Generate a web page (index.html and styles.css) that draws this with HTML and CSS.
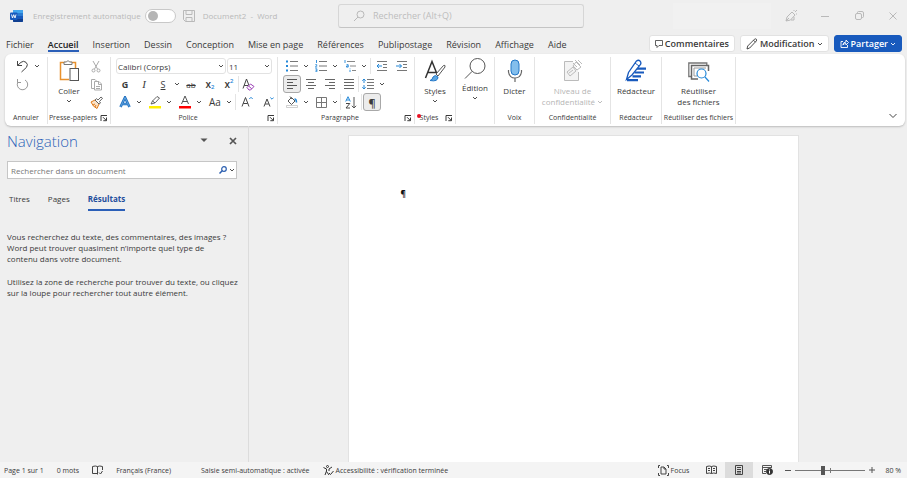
FILE: index.html
```html
<!DOCTYPE html>
<html lang="fr">

<head>
    <meta charset="UTF-8">
    <meta name="viewport" content="width=device-width, initial-scale=1.0">
    <title>Document2 - Word</title>
    <link rel="stylesheet" href="styles.css">
</head>

<body>
    <!-- shared symbols -->
    <svg class="sprite" width="0" height="0" aria-hidden="true">
        <symbol id="caret" viewBox="0 0 6 6"><path d="M1 2l2 2 2-2" fill="none" stroke="currentColor" stroke-width=".9"/></symbol>
        <symbol id="launcher" viewBox="0 0 8 8"><path d="M1 7V1.500h6M3 3.200l3.200 3.200M6.500 3.500v3.200H3.300" fill="none" stroke="currentColor"/></symbol>
    </svg>

    <header class="titlebar">
        <div class="title-left">
            <svg class="logo" width="13" height="12" viewBox="0 0 13 12">
                <rect x="3" width="10" height="12" rx="1" fill="#2b7cd3"/>
                <path d="M3 1a1 1 0 0 1 1-1h8a1 1 0 0 1 1 1v2H3z" fill="#41a5ee"/>
                <path d="M3 6h10v3H3z" fill="#185abd"/>
                <path d="M3 9h10v2a1 1 0 0 1-1 1H4a1 1 0 0 1-1-1z" fill="#103f91"/>
                <rect y="2.500" width="7.500" height="7.500" rx="1" fill="#185abd"/>
                <path d="M1.500 4.500l1 3.500 1.200-3.300L5 8l1-3.500" fill="none" stroke="#fff" stroke-width=".9"/>
            </svg>
            <label class="autosave" for="autosave">Enregistrement automatique</label>
            <input class="switch" type="checkbox" id="autosave">
            <button class="save" aria-label="Enregistrer">
                <svg width="12" height="12" viewBox="0 0 12 12" fill="none" stroke="currentColor"><path d="M.5.5h11v11h-9l-2-2zM3 .5v4h6v-4M3 11.500v-4h6v4"/></svg>
            </button>
            <span class="doc-name">Document2&nbsp; -&nbsp; Word</span>
        </div>
        <div class="search">
            <svg width="12" height="12" viewBox="0 0 12 12" fill="none" stroke="currentColor"><circle cx="7.500" cy="4.500" r="3.500"/><path d="M5 7L1 11"/></svg>
            <input type="search" placeholder="Rechercher (Alt+Q)" aria-label="Rechercher">
        </div>
        <div class="title-right">
            <div class="account"></div>
            <button aria-label="Stylo">
                <svg width="14" height="14" viewBox="0 0 14 14" fill="none" stroke="currentColor"><path d="M2 12l1-4 5-5 3 3-4.500 5zM2 12l3-3M7 11h3V8M10 2V1M11 3l2-2M12 5h1"/></svg>
            </button>
            <button aria-label="Réduire">
                <svg width="8" height="8" viewBox="0 0 8 8" stroke="currentColor"><path d="M0 4.500h8"/></svg>
            </button>
            <button aria-label="Niveau inférieur">
                <svg width="9" height="9" viewBox="0 0 9 9" fill="none" stroke="currentColor"><rect x=".5" y="2.500" width="6" height="6" rx="1.500"/><path d="M2.500 2V1.500q0-1 1-1H7Q8.500.5 8.500 2v3.500q0 1-1 1H7"/></svg>
            </button>
            <button aria-label="Fermer">
                <svg width="8" height="8" viewBox="0 0 8 8" stroke="currentColor"><path d="M.5.5l7 7M7.500.5l-7 7"/></svg>
            </button>
        </div>
    </header>

    <div class="tabs-row">
        <nav class="tabs">
            <a href="#">Fichier</a>
            <a href="#" class="active">Accueil</a>
            <a href="#">Insertion</a>
            <a href="#">Dessin</a>
            <a href="#">Conception</a>
            <a href="#">Mise en page</a>
            <a href="#">Références</a>
            <a href="#">Publipostage</a>
            <a href="#">Révision</a>
            <a href="#">Affichage</a>
            <a href="#">Aide</a>
        </nav>
        <div class="actions">
            <button class="action">
                <svg width="8" height="8" viewBox="0 0 8 8" fill="none" stroke="currentColor" stroke-width=".8"><path d="M.5.5h7v5H4l-2 2v-2H.5z"/></svg>
                Commentaires
            </button>
            <button class="action">
                <svg width="12" height="12" viewBox="0 0 12 12" fill="none" stroke="currentColor" stroke-width=".9"><path d="M1 11l.7-3L8.500 1.200q1-.8 1.800 0t0 1.800L3.700 10zM7.500 2.200l2 2"/></svg>
                Modification
                <svg class="caret"><use href="#caret"/></svg>
            </button>
            <button class="action primary">
                <svg width="9" height="9" viewBox="0 0 9 9" fill="none" stroke="currentColor" stroke-width=".9"><path d="M3 2.500H1v6h6.500V6M2.800 6q.4-3 3.200-3V1l2.500 2.500L6 6V4.500Q4 4.500 2.800 6z"/></svg>
                Partager
                <svg class="caret"><use href="#caret"/></svg>
            </button>
        </div>
    </div>

    <section class="ribbon">
        <div class="group group-undo">
            <div class="group-body">
                <div class="row">
                    <button class="tool" aria-label="Annuler"><svg width="13" height="13" viewBox="0 0 13 13" fill="none" stroke="#444"><path d="M1.500 1v4.500H6M1.500 5.500L5 2.300q2.500-2 5 0t.5 5L5.500 12"/></svg></button>
                    <button class="drop" aria-label="Options d'annulation"><svg class="caret"><use href="#caret"/></svg></button>
                </div>
                <div class="row">
                    <button class="tool" aria-label="Répéter" disabled><svg width="13" height="13" viewBox="0 0 13 13" fill="none" stroke="#999"><path d="M1.500 1v3.500H5M1.800 4.300A5.200 5.200 0 1 0 9 2"/></svg></button>
                </div>
            </div>
            <div class="group-foot"><span>Annuler</span></div>
        </div>

        <div class="group group-clipboard">
            <div class="group-body cols">
                <button class="big">
                    <svg width="22" height="24" viewBox="0 0 22 24" fill="none">
                        <path d="M11 20.500H2.500v-17h15V9" stroke="#e8912d" stroke-width="1.500"/>
                        <path d="M6 5.500V3h2.500q1.500-3 3 0H14v2.500z" fill="#fff" stroke="#777"/>
                        <rect x="12" y="9.500" width="8.500" height="12" fill="#fff" stroke="#555"/>
                    </svg>
                    Coller
                    <svg class="caret"><use href="#caret"/></svg>
                </button>
                <div class="stack">
                    <button class="tool" aria-label="Couper"><svg width="10" height="13" viewBox="0 0 10 13" fill="none" stroke="#aaa"><path d="M2 1l4.500 8M8 1L3.500 9"/><circle cx="2.500" cy="10.500" r="1.500"/><circle cx="7.500" cy="10.500" r="1.500"/></svg></button>
                    <button class="tool" aria-label="Copier"><svg width="13" height="13" viewBox="0 0 13 13" fill="none" stroke="#aaa"><path d="M4 10.500H1.500v-9H5l2 2M4.500 3.500H9l2.500 2.500v6h-7zM8.500 3.500v3h3M6 8.500h4M6 10.500h4"/></svg></button>
                    <button class="tool" aria-label="Reproduire la mise en forme"><svg width="13" height="13" viewBox="0 0 13 13" fill="none"><path d="M1 6l4-2 4 4-2 4.500q-4-1.500-6-6.500z" fill="#fbe3c8" stroke="#e07a1a"/><path d="M3 9l2-1M5 11l1-2" stroke="#e07a1a"/><path d="M5 4l1.500-1.300L8 4l3-3 1.500 1.300-3 3.200L10.500 7 9 8z" fill="#fff" stroke="#555" stroke-width=".9"/></svg></button>
                </div>
            </div>
            <div class="group-foot"><span>Presse-papiers</span><button class="launcher" aria-label="Presse-papiers, options"><svg><use href="#launcher"/></svg></button></div>
        </div>

        <div class="group group-font">
            <div class="group-body">
                <div class="row">
                    <div class="combo combo-font">
                        <select aria-label="Police"><option>Calibri (Corps)</option></select>
                        <svg class="caret"><use href="#caret"/></svg>
                    </div>
                    <div class="combo combo-size">
                        <select aria-label="Taille de police"><option>11</option></select>
                        <svg class="caret"><use href="#caret"/></svg>
                    </div>
                </div>
                <div class="row">
                    <button class="tool bold">G</button>
                    <button class="tool italic">I</button>
                    <div class="split"><button class="tool underline">S</button><button class="drop" aria-label="Soulignement"><svg class="caret"><use href="#caret"/></svg></button></div>
                    <button class="tool strike">ab</button>
                    <button class="tool script">x<sub>2</sub></button>
                    <button class="tool script">x<sup>2</sup></button>
                    <i class="sep"></i>
                    <button class="tool" aria-label="Effacer la mise en forme"><svg width="13" height="13" viewBox="0 0 13 13" fill="none"><path d="M1 10.500L4.500 1 7 7.500M2.200 7.500H6" stroke="#444"/><path d="M5 9.500L8.500 6l3.500 2.500L8.500 12H7z" fill="#fff" stroke="#9b3fb5"/><path d="M6.500 8l3.300 2.800" stroke="#9b3fb5"/></svg></button>
                </div>
                <div class="row wide">
                    <div class="split"><button class="tool" aria-label="Effets de texte"><svg width="12" height="12" viewBox="0 0 12 12" fill="none"><path d="M1.500 11L6 1.500 10.500 11M3.500 8h5" stroke="#1f6fc0" stroke-width="2.600"/><path d="M1.500 11L6 1.500 10.500 11M3.500 8h5" stroke="#8cc4f0" stroke-width=".6"/></svg></button><button class="drop" aria-label="Choisir un effet"><svg class="caret"><use href="#caret"/></svg></button></div>
                    <div class="split"><button class="tool" aria-label="Surlignage"><svg width="12" height="14" viewBox="0 0 12 14" fill="none"><path d="M2 9l1.500-3L8 1.500 10.500 3 6.500 7.500 4 8.500z" fill="#fff" stroke="#555" stroke-width=".9"/><path d="M3.500 6L6 8" stroke="#555"/><path d="M0 11h12v2.500H0z" fill="#ffee00"/></svg></button><button class="drop" aria-label="Couleur de surlignage"><svg class="caret"><use href="#caret"/></svg></button></div>
                    <div class="split"><button class="tool" aria-label="Couleur de police"><svg width="12" height="14" viewBox="0 0 12 14" fill="none"><path d="M2.500 9L6 1l3.500 8M3.800 6.500h4.400" stroke="#555"/><path d="M0 11h12v2.500H0z" fill="#f00"/></svg></button><button class="drop" aria-label="Choisir une couleur"><svg class="caret"><use href="#caret"/></svg></button></div>
                    <div class="split"><button class="tool case">Aa</button><button class="drop" aria-label="Modifier la casse"><svg class="caret"><use href="#caret"/></svg></button></div>
                    <i class="sep"></i>
                    <button class="tool" aria-label="Agrandir la police"><svg width="12" height="12" viewBox="0 0 12 12" fill="none"><path d="M1 10.500L4.500 1.500 8 10.500M2.300 7.500h4.400" stroke="#444"/><path d="M8.300 3L10 1.300 11.700 3" stroke="#2488d8"/></svg></button>
                    <button class="tool" aria-label="Réduire la police"><svg width="12" height="12" viewBox="0 0 12 12" fill="none"><path d="M2 10.500L5 3l3 7.500M3.200 8h3.600" stroke="#444"/><path d="M8.300 1.500L10 3.200l1.700-1.700" stroke="#2488d8"/></svg></button>
                </div>
            </div>
            <div class="group-foot"><span>Police</span><button class="launcher" aria-label="Police, options"><svg><use href="#launcher"/></svg></button></div>
        </div>

        <div class="group group-paragraph">
            <div class="group-body">
                <div class="row spaced">
                    <div class="split"><button class="tool" aria-label="Puces"><svg width="12" height="12" viewBox="0 0 12 12"><path d="M4 1.500h8M4 6h8M4 10.500h8" stroke="#777"/><path d="M0 .5h2v2H0zM0 5h2v2H0zM0 9.500h2v2H0z" fill="#2488d8"/></svg></button><button class="drop" aria-label="Bibliothèque de puces"><svg class="caret"><use href="#caret"/></svg></button></div>
                    <div class="split"><button class="tool" aria-label="Numérotation"><svg width="12" height="12" viewBox="0 0 12 12" fill="none"><path d="M4 1.500h8M4 6h8M4 10.500h8" stroke="#777"/><path d="M1.500 0v3M.3 4.700h1.500v1L.3 7h1.900M.3 8.800h1.600v3H.3M.6 10.300h1.300" stroke="#2488d8" stroke-width=".9"/></svg></button><button class="drop" aria-label="Formats de numérotation"><svg class="caret"><use href="#caret"/></svg></button></div>
                    <div class="split"><button class="tool" aria-label="Liste à plusieurs niveaux"><svg width="12" height="12" viewBox="0 0 12 12" fill="none"><path d="M3 1.500h8M6 6h6M8 10.500h4" stroke="#888"/><path d="M1 0v3M2.500 4.700h1.700v2.400H2.500V6h1.700M6 8.500v.8M6 10v2" stroke="#2488d8" stroke-width=".9"/></svg></button><button class="drop" aria-label="Niveaux"><svg class="caret"><use href="#caret"/></svg></button></div>
                    <i class="sep"></i>
                    <button class="tool" aria-label="Diminuer le retrait"><svg width="12" height="12" viewBox="0 0 12 12" fill="none"><path d="M1 1.500h10M7 4.500h4M7 7.500h4M1 10.500h10" stroke="#777"/><path d="M6 6H1M3 4L1 6l2 2" stroke="#2488d8"/></svg></button>
                    <button class="tool" aria-label="Augmenter le retrait"><svg width="12" height="12" viewBox="0 0 12 12" fill="none"><path d="M1 1.500h10M7 4.500h4M7 7.500h4M1 10.500h10" stroke="#777"/><path d="M0 6h5.500M3.500 4l2 2-2 2" stroke="#2488d8"/></svg></button>
                </div>
                <div class="row">
                    <button class="tool pressed" aria-label="Aligner à gauche"><svg width="12" height="12" viewBox="0 0 12 12" stroke="#555"><path d="M1 1.500h10M1 4.500h6M1 7.500h10M1 10.500h6"/></svg></button>
                    <button class="tool" aria-label="Centrer"><svg width="12" height="12" viewBox="0 0 12 12" stroke="#666"><path d="M1 1.500h10M3 4.500h6M1 7.500h10M3 10.500h6"/></svg></button>
                    <button class="tool" aria-label="Aligner à droite"><svg width="12" height="12" viewBox="0 0 12 12" stroke="#666"><path d="M1 1.500h10M5 4.500h6M1 7.500h10M5 10.500h6"/></svg></button>
                    <button class="tool" aria-label="Justifier"><svg width="12" height="12" viewBox="0 0 12 12" stroke="#666"><path d="M1 1.500h10M1 4.500h10M1 7.500h10M1 10.500h10"/></svg></button>
                    <i class="sep"></i>
                    <div class="split"><button class="tool" aria-label="Interligne"><svg width="12" height="12" viewBox="0 0 12 12" fill="none"><path d="M5 1.500h7M5 4.500h7M5 7.500h7M5 10.500h7" stroke="#777"/><path d="M2 1v4M.3 2.700L2 1l1.700 1.700M2 7v4M.3 9.300L2 11l1.700-1.700" stroke="#2488d8"/></svg></button><button class="drop" aria-label="Espacement"><svg class="caret"><use href="#caret"/></svg></button></div>
                </div>
                <div class="row spaced">
                    <div class="split"><button class="tool" aria-label="Trame de fond"><svg width="12" height="12" viewBox="0 0 12 12" fill="none"><path d="M2 5l3.500-3.500L9 5 5.500 8.500zM4 .5L6 3" stroke="#555"/><path d="M8.500 3q2 0 2 3.500" stroke="#2488d8" stroke-width="1.500"/><path d="M.5 9.500h11v2H.5z" fill="#fff" stroke="#bbb" stroke-width=".7"/></svg></button><button class="drop" aria-label="Couleur de trame"><svg class="caret"><use href="#caret"/></svg></button></div>
                    <div class="split"><button class="tool" aria-label="Bordures"><svg width="11" height="11" viewBox="0 0 11 11" fill="none" stroke="#777"><path d="M.5.5h10v10H.5zM5.500.5v10M.5 5.500h10"/></svg></button><button class="drop" aria-label="Types de bordures"><svg class="caret"><use href="#caret"/></svg></button></div>
                    <i class="sep"></i>
                    <button class="tool" aria-label="Trier"><svg width="12" height="13" viewBox="0 0 12 13" fill="none"><path d="M.7 5.500L3 .7l2.300 4.800M1.500 4h3" stroke="#2488d8"/><path d="M1 7.500h3.800L1 12h4" stroke="#444"/><path d="M9 1v11M6.800 9.800L9 12l2.200-2.200" stroke="#555"/></svg></button>
                    <i class="sep"></i>
                    <button class="tool pressed pilcrow">¶</button>
                </div>
            </div>
            <div class="group-foot"><span>Paragraphe</span><button class="launcher" aria-label="Paragraphe, options"><svg><use href="#launcher"/></svg></button></div>
        </div>

        <div class="group group-styles">
            <div class="group-body">
                <button class="big">
                    <svg width="22" height="24" viewBox="0 0 22 24" fill="none">
                        <path d="M1.500 19L8 2.500 13 15M4 13.500h8" stroke="#333" stroke-width="1.500"/>
                        <path d="M12 15l7.500-8.500q2-1 1.500 1.500L14 17z" fill="#fff" stroke="#555"/>
                        <path d="M6 21.500q2.500-.5 3-3.500 2-3 5 0 0 5-8 3.500z" fill="#5ba7e4" stroke="#2478c8"/>
                    </svg>
                    Styles
                    <svg class="caret"><use href="#caret"/></svg>
                </button>
            </div>
            <div class="group-foot"><span class="marked">Styles</span><button class="launcher" aria-label="Styles, options"><svg><use href="#launcher"/></svg></button></div>
        </div>

        <div class="group group-edit">
            <div class="group-body">
                <button class="big tight">
                    <svg width="22" height="22" viewBox="0 0 22 22" fill="none" stroke="#555"><circle cx="13.500" cy="8" r="7.500"/><path d="M8.200 13.300L1 20.500"/></svg>
                    Édition
                    <svg class="caret"><use href="#caret"/></svg>
                </button>
            </div>
        </div>

        <div class="group group-voice">
            <div class="group-body">
                <button class="big">
                    <svg width="16" height="24" viewBox="0 0 16 24" fill="none"><rect x="4" y="1" width="8" height="15" rx="4" fill="#83beec" stroke="#2478c8"/><path d="M1.500 11v2q1 6 6.500 6t6.500-6v-2M8 19v4" stroke="#666" stroke-width="1.200"/></svg>
                    Dicter
                </button>
            </div>
            <div class="group-foot"><span>Voix</span></div>
        </div>

        <div class="group group-privacy">
            <div class="group-body">
                <button class="big" disabled>
                    <svg width="20" height="24" viewBox="0 0 20 24" fill="none" stroke="#bbb"><path d="M10 2.500H1.500v19h14V13" fill="#f3f3f3"/><path d="M4 13l6-5 3 4-6 5zM6 14l4-3M10 7l3-4 5 5-4 3zM12 1l5 5M15 1l4 4M10 4l4 4"/></svg>
                    <span>Niveau de<br>confidentialité <svg class="caret"><use href="#caret"/></svg></span>
                </button>
            </div>
            <div class="group-foot"><span>Confidentialité</span></div>
        </div>

        <div class="group group-editor">
            <div class="group-body">
                <button class="big">
                    <svg width="24" height="24" viewBox="0 0 24 24" fill="none"><path d="M12 9.700h10M10.500 13.500h9.500M8.500 17.300h8.500M3 21.200h11" stroke="#185abd" stroke-width="2.200"/><path d="M2.500 20.500l2-7L12.500 2q2-1.500 3.500 0t.5 3.500L8 16z" fill="#fff" stroke="#185abd" stroke-width="1.300"/><path d="M11 4l4 3" stroke="#185abd"/></svg>
                    Rédacteur
                </button>
            </div>
            <div class="group-foot"><span>Rédacteur</span></div>
        </div>

        <div class="group group-reuse">
            <div class="group-body">
                <button class="big">
                    <svg width="22" height="24" viewBox="0 0 22 24" fill="none"><path d="M3 17.500H.8V4h18v2" stroke="#777" stroke-width="1.300"/><path d="M10 20H3.500V6.500h17V12" stroke="#666" stroke-width="1.500"/><path d="M9 17H6V9h12" stroke="#999"/><circle cx="13.500" cy="14.500" r="4.500" fill="#fff" stroke="#2488d8" stroke-width="1.200"/><path d="M17 18l4 4.500" stroke="#2488d8" stroke-width="1.200"/></svg>
                    <span>Réutiliser<br>des fichiers</span>
                </button>
            </div>
            <div class="group-foot"><span>Réutiliser des fichiers</span></div>
        </div>

        <button class="collapse" aria-label="Réduire le ruban"><svg width="8" height="6" viewBox="0 0 8 6" fill="none" stroke="#444"><path d="M.5 1L4 4.500 7.500 1"/></svg></button>
    </section>

    <main class="workspace">
        <aside class="pane">
            <div class="pane-head">
                <h1>Navigation</h1>
                <button aria-label="Options du volet"><svg width="8" height="5" viewBox="0 0 8 5"><path d="M.5.5h7L4 4z" fill="#555"/></svg></button>
                <button aria-label="Fermer le volet"><svg width="8" height="8" viewBox="0 0 8 8" stroke="#555" stroke-width="1.700"><path d="M1 1l6 6M7 1L1 7"/></svg></button>
            </div>
            <div class="pane-search">
                <input type="text" placeholder="Rechercher dans un document" aria-label="Rechercher dans un document">
                <button aria-label="Lancer la recherche"><svg width="8" height="8" viewBox="0 0 8 8" fill="none" stroke="#2b5fb0"><circle cx="5" cy="3" r="2.300" stroke-width="1.200"/><path d="M3.200 4.800L.5 7.500" stroke-width="1.500"/></svg></button>
                <button class="drop" aria-label="Options de recherche"><svg class="caret"><use href="#caret"/></svg></button>
            </div>
            <nav class="pane-tabs">
                <a href="#">Titres</a>
                <a href="#">Pages</a>
                <a href="#" class="active">Résultats</a>
            </nav>
            <p>Vous recherchez du texte, des commentaires, des images&nbsp;?<br>Word peut trouver quasiment n’importe quel type de<br>contenu dans votre document.</p>
            <p>Utilisez la zone de recherche pour trouver du texte, ou cliquez<br>sur la loupe pour rechercher tout autre élément.</p>
        </aside>
        <div class="canvas">
            <div class="page">¶</div>
        </div>
    </main>

    <footer class="status">
        <div class="status-left">
            <span>Page 1 sur 1</span>
            <span>0 mots</span>
            <svg width="11" height="10" viewBox="0 0 11 10" fill="none" stroke="#444"><path d="M5.500 8.500H.5v-7q3-1 5 0 2-1 5 0V5M5.500 1.500v8M7 7.500L8.500 9l2-3"/></svg>
            <span class="lang">Français (France)</span>
            <span>Saisie semi-automatique : activée</span>
            <span class="access"><svg width="11" height="11" viewBox="0 0 11 11" fill="none" stroke="#333"><circle cx="4.500" cy="1.500" r="1"/><path d="M.5 2.500l3 1.500v2L2 10M9 2L6 4v2M3.500 6.500L6 10M6 8l1.500 1.500L10.500 6"/></svg>Accessibilité : vérification terminée</span>
        </div>
        <div class="status-right">
            <button class="view focus"><svg width="11" height="11" viewBox="0 0 11 11" fill="none" stroke="#444"><path d="M.5 3V.5H2M.5 8v2.500H2M9 .5h1.500V3M9 10.500h1.500V8M3 2h3l2 2v5H3zM6 2v2h2"/></svg>Focus</button>
            <button class="view" aria-label="Mode lecture"><svg width="11" height="10" viewBox="0 0 11 10" fill="none" stroke="#444"><path d="M.5 8.500v-7q3-1 5 0 2-1 5 0v7q-3-1-5 0-2-1-5 0zM5.500 1.500v7M2 3.500h2M2 5.500h2M7 3.500h2M7 5.500h2"/></svg></button>
            <button class="view current" aria-label="Page"><svg width="8" height="10" viewBox="0 0 8 10" fill="none" stroke="#444"><path d="M.5.5h7v9h-7zM2 2.500h4M2 4.500h4M2 6.500h4M2 8h4"/></svg></button>
            <button class="view" aria-label="Web"><svg width="11" height="10" viewBox="0 0 11 10" fill="none" stroke="#555"><path d="M4 8.500H.5v-8h9V3M.5 2.500h9M2 4.500h3M2 6.500h2"/><circle cx="7.500" cy="6.500" r="3" fill="#333" stroke="#333"/><path d="M7.500 4.500v1M7.500 6v2.500" stroke="#fff"/></svg></button>
            <button class="zoom-btn" aria-label="Zoom arrière"><svg width="6" height="6" viewBox="0 0 6 6" stroke="#555"><path d="M0 3.500h6"/></svg></button>
            <input class="zoom" type="range" min="10" max="190" value="80" aria-label="Zoom">
            <button class="zoom-btn" aria-label="Zoom avant"><svg width="6" height="6" viewBox="0 0 6 6" stroke="#555"><path d="M0 3h6M3 0v6"/></svg></button>
            <span>80 %</span>
        </div>
    </footer>
</body>

</html>
```
FILE: styles.css
```css
* {
    box-sizing: border-box;
}

body {
    margin: 0;
    min-height: 100vh;
    display: flex;
    flex-direction: column;
    background-color: #efefef;
    color: #3a3a3a;
    font-family: "Open Sans", "Noto Sans", sans-serif;
    font-size: 8px;
    line-height: 11px;
}

button,
input,
select {
    margin: 0;
    padding: 0;
    border: none;
    background: none;
    color: inherit;
    font: inherit;
}

button {
    display: flex;
    align-items: center;
    justify-content: center;
}

a {
    color: inherit;
    text-decoration: none;
}

svg {
    flex-shrink: 0;
}

.sprite {
    position: absolute;
}

.caret {
    width: 6px;
    height: 6px;
}

/* title bar */
.titlebar {
    display: flex;
    align-items: center;
    height: 32px;
    padding-bottom: 1px;
    color: #b9b9b9;
}

.title-left {
    width: 338px;
    padding-left: 10px;
    display: flex;
    align-items: center;
}

.autosave {
    margin-left: 10px;
}

.switch {
    appearance: none;
    width: 31px;
    height: 14px;
    margin: 0 7px 0 4px;
    padding: 1px;
    border: 1px solid #c8c8c8;
    border-radius: 7px;
    background-color: #fff;
}

.switch::before {
    content: "";
    display: block;
    width: 10px;
    height: 10px;
    margin-left: 1px;
    border-radius: 50%;
    background-color: #b5b5b5;
}

.doc-name {
    margin-left: 8px;
}

.search {
    width: 246px;
    height: 24px;
    padding-left: 14px;
    display: flex;
    align-items: center;
    gap: 8px;
    border: 1px solid #d6d6d6;
    border-bottom-color: #c4c4c4;
    border-radius: 3px;
}

.search input {
    flex: 1;
    min-width: 0;
    font-size: 9px;
}

.search input::placeholder {
    color: #bdbdbd;
}

.title-right {
    flex: 1;
    display: flex;
    justify-content: flex-end;
    align-items: center;
    gap: 6px;
}

.title-right button {
    width: 28px;
    height: 24px;
}

.account {
    width: 98px;
    height: 26px;
    background-color: #f1f1f1;
}

/* tabs */
.tabs-row {
    display: flex;
    justify-content: space-between;
    height: 22px;
    padding: 3px 5px 2px 6px;
}

.tabs {
    display: flex;
    gap: 14px;
    font-size: 9px;
    line-height: 19px;
}

.tabs a {
    height: 17px;
    white-space: nowrap;
}

.tabs .active {
    border-bottom: 2px solid #2b5fb8;
    font-weight: 600;
    color: #222;
}

.actions {
    display: flex;
    gap: 5px;
}

.action {
    height: 17px;
    padding: 0 5px;
    gap: 2px;
    border: 1px solid #e2e2e2;
    border-radius: 3px;
    background-color: #fff;
    font-size: 9px;
    font-weight: 600;
}

.action.primary {
    border-color: #185abd;
    background-color: #185abd;
    color: #fff;
}

/* ribbon */
.ribbon {
    display: flex;
    height: 72px;
    margin: 0 2px 0 5px;
    padding: 3px 0 2px;
    border-radius: 6px;
    background-color: #fff;
    box-shadow: 0 1px 2px #bbb;
}

.group {
    display: flex;
    flex-direction: column;
    border-right: 1px solid #e4e4e4;
}

.group-undo { width: 43px; }
.group-clipboard { width: 63px; }
.group-font { width: 167px; }
.group-paragraph { width: 137px; }
.group-styles { width: 41px; }
.group-edit { width: 39px; }
.group-voice { width: 40px; }
.group-privacy { width: 76px; }
.group-editor { width: 51px; }
.group-reuse { width: 74px; }

.group-body {
    height: 54px;
    padding-left: 5px;
}

.group-undo .group-body {
    padding-left: 8px;
}

.group-body.cols {
    display: flex;
}

.group-foot {
    display: flex;
    align-items: center;
    height: 13px;
    font-size: 7px;
    white-space: nowrap;
}

.group-foot span {
    flex: 1;
    display: flex;
    justify-content: center;
}

.launcher {
    width: 12px;
}

.launcher svg {
    width: 8px;
    height: 8px;
}

/* red dot that sits on the label */
.marked {
    position: relative;
}

.marked::before {
    content: "";
    position: absolute;
    left: 2px;
    top: 2px;
    width: 4px;
    height: 4px;
    border-radius: 50%;
    background-color: #e81123;
}

.row {
    display: flex;
    align-items: center;
    gap: 1px;
    height: 18px;
}

.row.spaced {
    gap: 2px;
}

.row.wide {
    gap: 3px;
}

.split {
    display: flex;
}

.tool {
    width: 18px;
    height: 18px;
    font-size: 9px;
}

.drop {
    width: 9px;
    height: 18px;
}

.sep {
    width: 1px;
    height: 16px;
    background-color: #e4e4e4;
}

.row:not(:first-child) .sep {
    margin: 0 -1px;
}

.pressed {
    border: 1px solid #a8a8a8;
    border-radius: 3px;
    background-color: #ececec;
}

.pilcrow {
    font-size: 11px;
    font-weight: 600;
}

.bold {
    font-weight: 700;
}

.italic {
    font-family: "Liberation Serif", serif;
    font-size: 11px;
    font-style: italic;
}

.underline {
    text-decoration: underline;
}

.strike {
    font-size: 8px;
    text-decoration: line-through;
}

.case {
    font-size: 10px;
}

.script {
    padding: 3px 0;
    font-size: 10px;
    font-weight: 600;
}

.script sub,
.script sup {
    color: #2488d8;
    font-size: 6px;
    line-height: 6px;
}

.script sub {
    align-self: flex-end;
}

.script sup {
    align-self: flex-start;
}

.combo {
    position: relative;
    height: 16px;
    border: 1px solid #e2e2e2;
    border-radius: 3px;
}

.combo-font {
    width: 110px;
}

.combo-size {
    width: 45px;
}

.combo select {
    appearance: none;
    width: 100%;
    height: 14px;
    padding-left: 1px;
}

.combo .caret {
    position: absolute;
    right: 1px;
    top: 4px;
    pointer-events: none;
}

.big {
    width: 100%;
    flex-direction: column;
    justify-content: flex-start;
    padding-top: 2px;
}

.big > svg:first-child {
    margin-bottom: 2px;
}

.big .caret {
    margin-top: 2px;
}

.big span .caret {
    margin: 0;
}

.big:disabled {
    color: #b5b5b5;
}

.big.tight {
    padding-top: 1px;
}

.group-body:has(.big) {
    padding-left: 0;
}

.cols .big {
    width: 42px;
}

.stack .tool {
    width: 12px;
}

.collapse {
    align-self: flex-end;
    margin: 0 8px 5px auto;
}

/* navigation pane */
.workspace {
    flex: 1;
    display: flex;
}

.pane {
    width: 249px;
    padding-left: 7px;
    border-right: 1px solid #dcdcdc;
}

.pane-head {
    display: flex;
    align-items: center;
    height: 29px;
    margin-right: 11px;
}

.pane-head h1 {
    flex: 1;
    margin: 0;
    color: #2b5fb8;
    font-size: 15px;
    font-weight: 300;
    line-height: 20px;
}

.pane-head button {
    width: 8px;
    margin-left: 21px;
}

.pane-search {
    display: flex;
    align-items: center;
    height: 18px;
    margin: 6px 11px 0 0;
    padding-left: 3px;
    border: 1px solid #c6c6c6;
    background-color: #fff;
}

.pane-search input {
    flex: 1;
    min-width: 0;
}

.pane-search input::placeholder {
    color: #777;
}

.pane-tabs {
    display: flex;
    gap: 18px;
    margin: 14px 0 20px;
    padding-left: 2px;
}

.pane-tabs a {
    height: 18px;
}

.pane-tabs .active {
    border-bottom: 2px solid #2b5fb8;
    color: #1f4e9c;
    font-weight: 700;
}

.pane p {
    margin: 0 0 12px;
}

/* document */
.canvas {
    flex: 1;
    display: flex;
    justify-content: center;
    padding: 9px 10px 0 0;
}

.page {
    width: 451px;
    padding: 52px;
    border: 1px solid #e2e2e2;
    border-bottom: none;
    background-color: #fff;
    color: #111;
    font-weight: 700;
}

/* status bar */
.status {
    display: flex;
    justify-content: space-between;
    height: 16px;
    padding: 0 6px 0 4px;
    background-color: #f4f4f4;
    font-size: 7px;
    white-space: nowrap;
}

.status-left,
.status-right {
    display: flex;
    align-items: center;
}

.status-left {
    gap: 13px;
}

.lang {
    margin-right: 17px;
}

.access {
    display: flex;
    align-items: center;
    gap: 2px;
}

.view {
    width: 28px;
    height: 16px;
}

.view.focus {
    width: auto;
    margin-right: 8px;
    gap: 2px;
}

.view.current {
    background-color: #dcdcdc;
}

.zoom-btn {
    width: 14px;
}

.zoom {
    appearance: none;
    width: 70px;
    height: 10px;
    background: linear-gradient(#777, #777) center / 100% 1px no-repeat, linear-gradient(#777, #777) center / 1px 5px no-repeat;
}

.zoom::-webkit-slider-thumb {
    appearance: none;
    width: 4px;
    height: 9px;
    background-color: #555;
}

.status-right span {
    margin-left: 6px;
}
```
